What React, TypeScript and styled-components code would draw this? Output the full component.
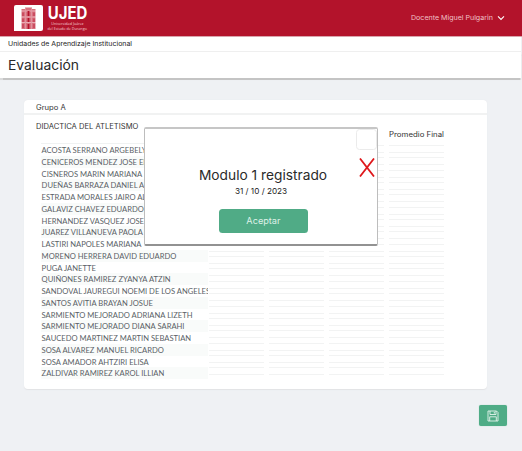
import React from 'react';
import styled, { createGlobalStyle } from 'styled-components';

const GlobalStyle = createGlobalStyle`
  * { box-sizing: border-box; }
  body { margin: 0; background: #eff1f4; font-family: Inter, "Liberation Sans", sans-serif; overflow: hidden; }
`;

const Page = styled.div`
  position: relative;
  width: 522px;
  height: 451px;
  background: #eff1f4;
`;

const Label = styled.span<{ $size: number; $stretch?: number; $color?: string; $center?: boolean }>`
  display: block;
  width: max-content;
  white-space: nowrap;
  font-size: ${p => p.$size}px;
  line-height: 1.2;
  color: ${p => p.$color ?? '#333'};
  transform: scaleX(${p => p.$stretch ?? 1});
  transform-origin: ${p => (p.$center ? 'center' : 'left')};
`;

const Header = styled.header`
  display: flex;
  justify-content: space-between;
  height: 37px;
  padding: 5px 17px 0 14px;
  background: #b3132b;
  border-bottom: 1px solid #d9a5ad;
`;

const Brand = styled.div`
  display: flex;
  gap: 4px;
`;

const BrandText = styled.div`
  display: flex;
  flex-direction: column;
  align-items: center;
  width: 40px;
`;

const BrandName = styled.div`
  font-weight: 700;
  font-size: 17px;
  line-height: 16px;
  color: #fff;
  transform: scaleX(0.88);
`;

const BrandLine = styled.div`
  font: 4px/5px "Open Sans", sans-serif;
  white-space: nowrap;
  color: #f3cfd4;
  transform: scaleX(0.93);
`;

const User = styled.div`
  display: flex;
  align-items: center;
  width: 94px;
  height: 26px;
  justify-content: space-between;
`;

const Crumb = styled.div`
  display: flex;
  align-items: center;
  width: 521px;
  height: 15px;
  padding: 1px 0 0 8px;
  background: #fff;
  border-bottom: 1px solid #efefef;
`;

const TitleBar = styled.div`
  display: flex;
  align-items: center;
  width: 521px;
  height: 26px;
  padding: 1px 0 0 8px;
  background: #fff;
  box-shadow: 0 1.5px 1px #c4c4c4;
`;

const Card = styled.main`
  width: 463px;
  height: 289px;
  margin: 22px 0 0 24px;
  background: #fff;
  border-radius: 4px;
  box-shadow: 0 0.5px 1px #e2e3e5;
`;

const CardHead = styled.div`
  display: flex;
  align-items: center;
  height: 15px;
  padding: 3px 0 0 12px;
  border-bottom: 2px solid #f1f2f2;
`;

const Subject = styled.div`
  height: 24px;
  padding: 8px 0 0 12px;
`;

const Sheet = styled.div`
  display: grid;
  grid-template-columns: 163px repeat(4, 55px);
  column-gap: 4.9px;
  padding-left: 17px;
`;

const Names = styled.ul`
  list-style: none;
  margin: 4.2px 0 0;
  padding: 0;
  border-top: 1px solid #f0f2f2;
  overflow: hidden;
  width: 166.5px;
`;

const NameRow = styled.li`
  height: 11.76px;
  padding-left: 0.6px;
  font: 7.62px/12.2px Lato, sans-serif;
  color: #5a5f66;
  white-space: nowrap;
  &:nth-child(even) { background: #f9fbfa; }
`;

const Column = styled.div`
  display: grid;
  grid-template-rows: 6px repeat(19, 8px);
  row-gap: 4.35px;
  margin-top: -4.3px;
`;

const ColumnHead = styled.div`
  display: flex;
  align-items: center;
  margin-top: -4px;
`;

const Field = styled.div`
  border: solid #f2f3f3;
  border-width: 1px 0;
`;

const SaveButton = styled.button`
  display: flex;
  align-items: center;
  justify-content: center;
  width: 28px;
  height: 21px;
  margin: 16px 0 0 479px;
  padding: 0;
  border: 0;
  border-radius: 2px;
  background: #4fac86;
  box-shadow: 0 0 1px #8bc5ad;
`;

const Dialog = styled.section`
  position: absolute;
  left: 144px;
  top: 127px;
  width: 234px;
  height: 119px;
  display: flex;
  flex-direction: column;
  align-items: center;
  background: #fff;
  border: 1px solid #bdbdbd;
  border-top: 2px solid #c6c6c6;
  border-bottom: 2px solid #929292;
  border-radius: 2px;
  padding: 39px 0 0 4px;
`;

const DialogDate = styled.div`
  margin: 3px 4px 0 0;
`;

const Accept = styled.button`
  display: flex;
  align-items: center;
  justify-content: center;
  width: 89px;
  height: 24px;
  margin-top: 12px;
  padding: 1px 0 0;
  border: 0;
  border-radius: 3.5px;
  background: #50ab86;
  font-family: inherit;
`;

const CloseBox = styled.div`
  position: absolute;
  right: 0;
  top: 0;
  width: 21px;
  height: 21px;
  border: 1px solid #ebebeb;
  border-radius: 3.5px;
`;

const CloseIcon = styled.svg`
  position: absolute;
  right: 2px;
  top: 29px;
`;

const students = [
  'ACOSTA SERRANO ARGEBELY', 'CENICEROS MENDEZ JOSE EDUARDO', 'CISNEROS MARIN MARIANA',
  'DUEÑAS BARRAZA DANIEL ALBERTO', 'ESTRADA MORALES JAIRO ALEXIS', 'GALAVIZ CHAVEZ EDUARDO',
  'HERNANDEZ VASQUEZ JOSE', 'JUAREZ VILLANUEVA PAOLA', 'LASTIRI NAPOLES MARIANA',
  'MORENO HERRERA DAVID EDUARDO', 'PUGA JANETTE', 'QUIÑONES RAMIREZ ZYANYA ATZIN',
  'SANDOVAL JAUREGUI NOEMI DE LOS ANGELES', 'SANTOS AVITIA BRAYAN JOSUE',
  'SARMIENTO MEJORADO ADRIANA LIZETH', 'SARMIENTO MEJORADO DIANA SARAHI',
  'SAUCEDO MARTINEZ MARTIN SEBASTIAN', 'SOSA ALVAREZ MANUEL RICARDO',
  'SOSA AMADOR AHTZIRI ELISA', 'ZALDIVAR RAMIREZ KAROL ILLIAN',
];

const columns = ['', '', '', 'Promedio Final'];

const Emblem = () => (
  <svg width="29" height="26" viewBox="0 0 29 26">
    <path d="M2 0H27Q29 0 29 2V24Q29 26 27 26H0V2Q0 0 2 0Z" fill="#fff" />
    <path d="M7.5 4H11V2.5H18V4H21.5V24H7.5Z" fill="#d9717f" />
    <path d="M7 6H22M7 12H22M7 17.5H22" stroke="#fff" strokeOpacity=".6" strokeWidth=".7" />
    <path d="M9 7.5V11M9 13.5V17M9 19V23M20 7.5V11M20 13.5V17M20 19V23" stroke="#c23a50" strokeWidth="1.3" />
    <path d="M11.5 3V24M17.5 3V24" stroke="#e29aa5" strokeWidth=".8" />
    <path d="M14.5 6V11M14.5 13V17M14.5 19V24" stroke="#b3132b" strokeWidth="1.8" />
  </svg>
);

export default function App() {
  return (
    <Page>
      <GlobalStyle />
      <Header>
        <Brand>
          <Emblem />
          <BrandText>
            <BrandName>UJED</BrandName>
            <BrandLine>Universidad Juárez</BrandLine>
            <BrandLine>del Estado de Durango</BrandLine>
          </BrandText>
        </Brand>
        <User>
          <Label $size={6.8} $stretch={1.04} $color="#f0c0c7">Docente Miguel Pulgarin</Label>
          <svg width="8" height="6" viewBox="0 0 8 6" fill="none" stroke="#fff" strokeWidth="1.1">
            <path d="M1 1.4L4 4.4L7 1.4" />
          </svg>
        </User>
      </Header>
      <Crumb><Label $size={6.6} $stretch={1.055} $color="#222">Unidades de Aprendizaje Institucional</Label></Crumb>
      <TitleBar><Label $size={13.1} $stretch={1.06} $color="#2a2a2a">Evaluación</Label></TitleBar>
      <Card>
        <CardHead><Label $size={7} $stretch={1.09}>Grupo A</Label></CardHead>
        <Subject><Label $size={7} $stretch={1.085}>DIDACTICA DEL ATLETISMO</Label></Subject>
        <Sheet>
          <Names>{students.map(name => <NameRow key={name}>{name}</NameRow>)}</Names>
          {columns.map((title, i) => (
            <Column key={i}>
              <ColumnHead>{title && <Label $size={7.2} $stretch={1.09}>{title}</Label>}</ColumnHead>
              {Array.from({ length: 19 }, (_, row) => <Field key={row} />)}
            </Column>
          ))}
        </Sheet>
      </Card>
      <SaveButton aria-label="Guardar">
        <svg width="12" height="12" viewBox="0 0 12 12" fill="none" stroke="#e5f4ed" strokeWidth=".9">
          <path d="M1 1H9.5L11 2.5V11H1ZM3 1V4.5H9V1M2.7 11V6.8H9.3V11M7.3 1.8V3.6" />
        </svg>
      </SaveButton>
      <Dialog>
        <Label $size={13.1} $stretch={1.05} $color="#2a2a2a" $center>Modulo 1 registrado</Label>
        <DialogDate><Label $size={8.2} $color="#222" $center>31 / 10 / 2023</Label></DialogDate>
        <Accept><Label $size={8.8} $stretch={1.04} $color="#dff1e8" $center>Aceptar</Label></Accept>
        <CloseBox />
        <CloseIcon width="16" height="19" viewBox="0 0 16 19" stroke="#df171b" strokeWidth="1.8">
          <path d="M1 .5L15 18.5M15 .5L1 18.5" />
        </CloseIcon>
      </Dialog>
    </Page>
  );
}
